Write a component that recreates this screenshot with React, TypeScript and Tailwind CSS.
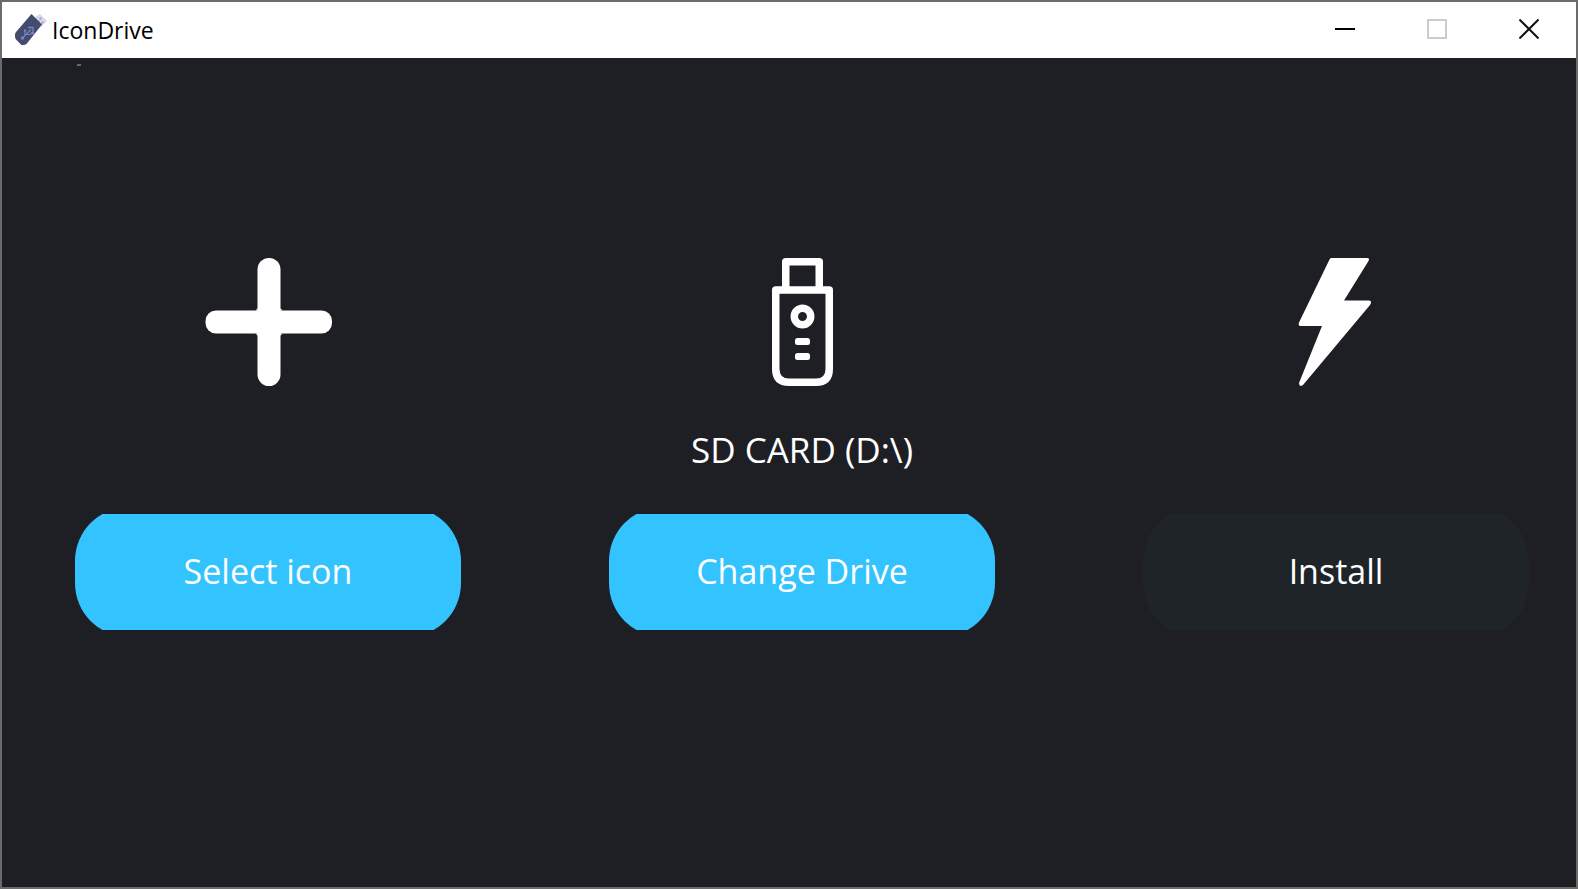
import React from "react";

function AppLogo() {
  return (
    <svg width="32" height="32" viewBox="0 0 32 32" aria-hidden="true">
      <path d="M25 0 32 7 26 13 17 5z" fill="#d7daea" />
      <path d="M22.500 6.500h2v2h-2zM26.500 7.500h2v2h-2zM24.500 3.500h2v2h-2z" fill="#9a9fb8" />
      <path d="M16.500 0 27 10.500 11.500 30Q10 31 8 31H6.500L1 25.500Q0 24.500 0 22V21Q0 19 1 18z" fill="#434c6d" />
      <path d="M8 23.500 16 15.500M10 21.500V16.500M11.500 20.500H15L18 18" fill="none" stroke="#7584c4" strokeWidth="1.200" />
      <path d="M13 13.500h5v5" fill="none" stroke="#7584c4" strokeWidth="1.300" />
      <circle cx="7.500" cy="24" r="1.800" fill="#7584c4" />
      <circle cx="10" cy="16.500" r="1.200" fill="#7584c4" />
      <path d="M16.500 18h2.500v2.500h-2.500z" fill="#7584c4" />
    </svg>
  );
}

function PlusIcon() {
  return (
    <svg width="128" height="128" viewBox="0 0 128 128" fill="#fff" aria-hidden="true">
      <rect x="53.500" y="0" width="23" height="128" rx="11.500" />
      <rect x="1.500" y="52.500" width="126.500" height="23" rx="10.500" />
      <path d="M51.500 52.500h27l-2-2h-23zM51.500 75.500h27l-2 2h-23z" />
    </svg>
  );
}

function DriveIcon() {
  return (
    <svg width="128" height="128" viewBox="0 0 128 128" fill="none" stroke="#fff" strokeWidth="7.500" aria-hidden="true">
      <g transform="translate(.5 0)">
        <path d="M47.250 30V3.750H80.750V30" strokeLinejoin="round" />
        <path d="M37.250 32H90.750V111Q90.750 124.250 77.500 124.250H50.500Q37.250 124.250 37.250 111z" strokeLinejoin="round" />
        <circle cx="64" cy="58.500" r="8.200" />
        <rect x="56.500" y="80" width="15" height="7" rx="2.500" fill="#fff" stroke="none" />
        <rect x="56.500" y="95" width="15" height="7" rx="2.500" fill="#fff" stroke="none" />
      </g>
    </svg>
  );
}

function BoltIcon() {
  return (
    <svg width="128" height="128" viewBox="0 0 128 128" fill="#fff" aria-hidden="true">
      <path d="M59 0H95Q98 0 96.500 3L72 42.500H97Q100.500 43 98 47L31 127Q27 129.500 27 125L50 68H28Q26 67.500 27 64.500L57.500 1.500Q58 0 59 0z" />
    </svg>
  );
}

type ActionProps = {
  icon: React.ReactNode;
  label?: string;
  action: string;
  disabled?: boolean;
};

function Action({ icon, label, action, disabled }: ActionProps) {
  return (
    <section className="flex flex-col items-center">
      {icon}
      <p className="flex h-[128px] items-center whitespace-nowrap text-[35px] leading-[48px]">{label}</p>
      <button
        type="button"
        disabled={disabled}
        className="-my-[7px] h-[130px] w-full rounded-[54px] bg-[#33c3ff] pb-[3px] text-[34px] leading-[48px] [clip-path:inset(7px_0)] disabled:bg-[#1f2428]"
      >
        {action}
      </button>
    </section>
  );
}

export default function App() {
  return (
    <div className="flex min-h-screen flex-col border-2 border-[#6b6b6b] bg-[#1e1f24] font-['Open_Sans','Noto_Sans',sans-serif] text-white">
      <header className="flex h-14 items-center justify-between bg-white text-black">
        <div className="flex items-center gap-[5px] pl-[13px]">
          <AppLogo />
          <h1 className="text-[23px] leading-8">IconDrive</h1>
        </div>
        <div className="flex h-full pb-[2px] pr-px">
          <button type="button" aria-label="Minimize" className="grid w-[92px] place-items-center">
            <svg width="20" height="20" aria-hidden="true"><path d="M0 10h20" stroke="#000" strokeWidth="2" /></svg>
          </button>
          <button type="button" aria-label="Maximize" disabled className="grid w-[92px] place-items-center">
            <svg width="20" height="20" aria-hidden="true"><path d="M1 1h18v18H1z" fill="none" stroke="#ccc" strokeWidth="2" /></svg>
          </button>
          <button type="button" aria-label="Close" className="grid w-[92px] place-items-center">
            <svg width="20" height="20" aria-hidden="true"><path d="M.5.5l19 19M19.500.5l-19 19" stroke="#111" strokeWidth="2" /></svg>
          </button>
        </div>
      </header>
      <div className="pl-[75px] pt-[6px]">
        <div className="h-[2px] w-1 bg-[#64686b]" />
      </div>
      <main className="grid grid-cols-3 gap-[148px] pl-[73px] pr-[47px] pt-[192px]">
        <Action icon={<PlusIcon />} action="Select icon" />
        <Action icon={<DriveIcon />} label="SD CARD (D:\)" action="Change Drive" />
        <Action icon={<BoltIcon />} action="Install" disabled />
      </main>
    </div>
  );
}
